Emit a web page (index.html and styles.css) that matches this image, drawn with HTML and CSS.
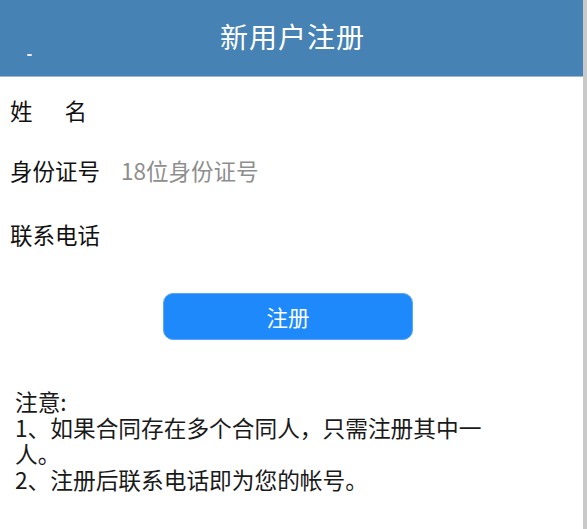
FILE: index.html
```html
<!DOCTYPE html>
<html lang="zh-CN">
<head>
<meta charset="utf-8">
<title>新用户注册</title>
<link rel="stylesheet" href="styles.css">
</head>
<body>
<div class="page">
  <header class="topbar">
    <span class="back-mark"></span>
    <h1 class="title">新用户注册</h1>
  </header>
  <form class="form">
    <div class="row row-name">
      <label class="label label-spaced"><span>姓</span><span>名</span></label>
      <span class="field"></span>
    </div>
    <div class="row row-id">
      <label class="label">身份证号</label>
      <span class="field placeholder">18位身份证号</span>
    </div>
    <div class="row row-phone">
      <label class="label">联系电话</label>
      <span class="field"></span>
    </div>
    <div class="actions">
      <button type="button" class="btn">注册</button>
    </div>
  </form>
  <div class="notes">
    <p>注意:</p>
    <p>1、如果合同存在多个合同人，只需注册其中一人。</p>
    <p>2、注册后联系电话即为您的帐号。</p>
  </div>
</div>
</body>
</html>
```

FILE: styles.css
```css
html, body {
  margin: 0;
  padding: 0;
  background: #ffffff;
}
body {
  font-family: "Noto Sans CJK SC", "Noto Sans", sans-serif;
  color: #111111;
}
.page {
  width: 583px;
  min-height: 529px;
  border-right: 4px solid #c9c9c9;
  background: #ffffff;
}
.topbar {
  position: relative;
  height: 77px;
  background: #4682b4;
  display: flex;
  align-items: center;
  justify-content: center;
  border-bottom: 1px solid #9fb9cf;
  box-sizing: border-box;
  padding-bottom: 4px;
}
.back-mark {
  position: absolute;
  left: 27px;
  top: 54px;
  width: 5px;
  height: 2px;
  background: #e6eef6;
  border-radius: 1px;
}
.title {
  margin: 0;
  font-size: 28px;
  font-weight: 400;
  color: #ffffff;
  line-height: 1;
  letter-spacing: 1px;
  padding-left: 2px;
}
.form {
  padding-top: 3px;
}
.row {
  display: flex;
  align-items: center;
  padding-left: 10px;
}
.row-name {
  height: 60px;
}
.row-id {
  height: 59px;
}
.row-phone {
  height: 70px;
}
.label {
  width: 90px;
  font-size: 22.5px;
  line-height: 30px;
  color: #111111;
  white-space: nowrap;
}
.label-spaced {
  display: flex;
  justify-content: space-between;
  width: 77px;
  margin-right: 13px;
}
.field {
  margin-left: 21px;
  font-size: 22.5px;
  line-height: 30px;
}
.placeholder {
  color: #8e8e8e;
}
.actions {
  padding-left: 163px;
  margin-top: 24px;
}
.btn {
  width: 250px;
  height: 47px;
  border: 1px solid #5aa6f5;
  border-radius: 10px;
  background: #1d89fb;
  color: #ffffff;
  font-family: "Noto Sans CJK SC", "Noto Sans", sans-serif;
  font-size: 21.5px;
  padding: 0;
  cursor: pointer;
}
.notes {
  margin-top: 49px;
  padding-left: 15px;
  width: 485px;
  font-size: 22.7px;
  line-height: 26px;
  color: #1a1a1a;
}
.notes p {
  margin: 0;
}
```
